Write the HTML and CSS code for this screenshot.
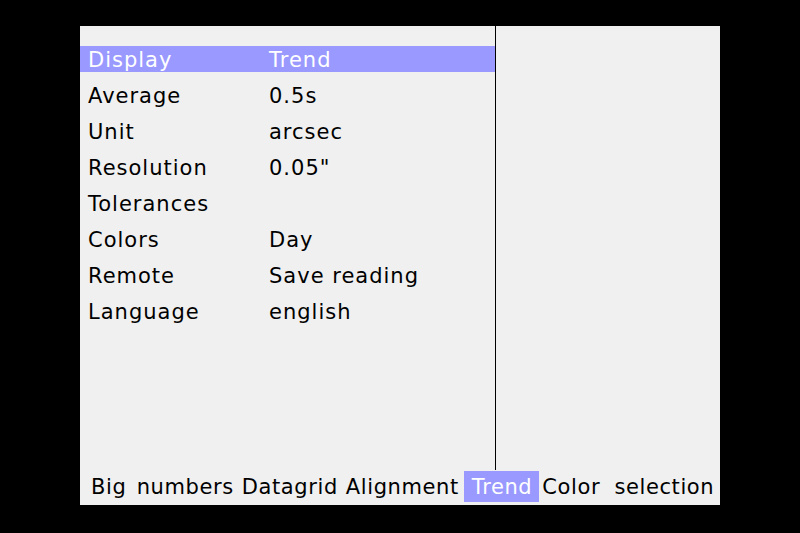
FILE: index.html
```html
<!DOCTYPE html>
<html>
<head>
<meta charset="utf-8">
<link rel="stylesheet" href="styles.css">
</head>
<body>
<div class="panel">
  <div class="main">
    <div class="menu">
      <div class="row sel"><span class="k">Display</span><span class="v">Trend</span></div>
      <div class="row"><span class="k">Average</span><span class="v">0.5s</span></div>
      <div class="row"><span class="k">Unit</span><span class="v">arcsec</span></div>
      <div class="row"><span class="k">Resolution</span><span class="v">0.05"</span></div>
      <div class="row"><span class="k">Tolerances</span><span class="v"></span></div>
      <div class="row"><span class="k">Colors</span><span class="v">Day</span></div>
      <div class="row"><span class="k">Remote</span><span class="v">Save reading</span></div>
      <div class="row"><span class="k">Language</span><span class="v">english</span></div>
    </div>
    <div class="side"></div>
  </div>
  <div class="tabs">
    <span class="tab t1">Big numbers</span>
    <span class="tab t2">Datagrid</span>
    <span class="tab t3">Alignment</span>
    <span class="tab t4 active">Trend</span>
    <span class="tab t5">Color selection</span>
  </div>
</div>
</body>
</html>
```
FILE: styles.css
```css
html, body {
  margin: 0;
  padding: 0;
  background: #000;
}
body {
  width: 800px;
  height: 533px;
  overflow: hidden;
  font-family: "DejaVu Sans", sans-serif;
  font-size: 21px;
  color: #000;
}
.panel {
  margin: 26px 0 0 80px;
  width: 640px;
  height: 479px;
  background: #f0f0f0;
  display: flex;
  flex-direction: column;
}
.main {
  height: 444px;
  display: flex;
}
.menu {
  width: 415px;
  border-right: 1px solid #000;
  padding-top: 20px;
  display: flex;
  flex-direction: column;
  gap: 10px;
}
.row {
  height: 26px;
  line-height: 28px;
  display: flex;
  padding-left: 8px;
  letter-spacing: 1px;
}
.row.sel {
  background: #9999ff;
  color: #fff;
}
.k {
  width: 181px;
}
.side {
  flex: 1;
}
.tabs {
  height: 35px;
  display: flex;
  align-items: center;
  padding-left: 11px;
  letter-spacing: 0.6px;
  word-spacing: 3px;
}
.tab {
  height: 31px;
  line-height: 33px;
  margin-top: -2px;
  white-space: nowrap;
}
.t2 { margin-left: 8px; }
.t3 { margin-left: 8px; }
.t4 { margin-left: 5px; padding: 0 7px 0 8px; }
.t5 { margin-left: 3px; word-spacing: 7px; }
.active {
  background: #9999ff;
  color: #fff;
}
```
